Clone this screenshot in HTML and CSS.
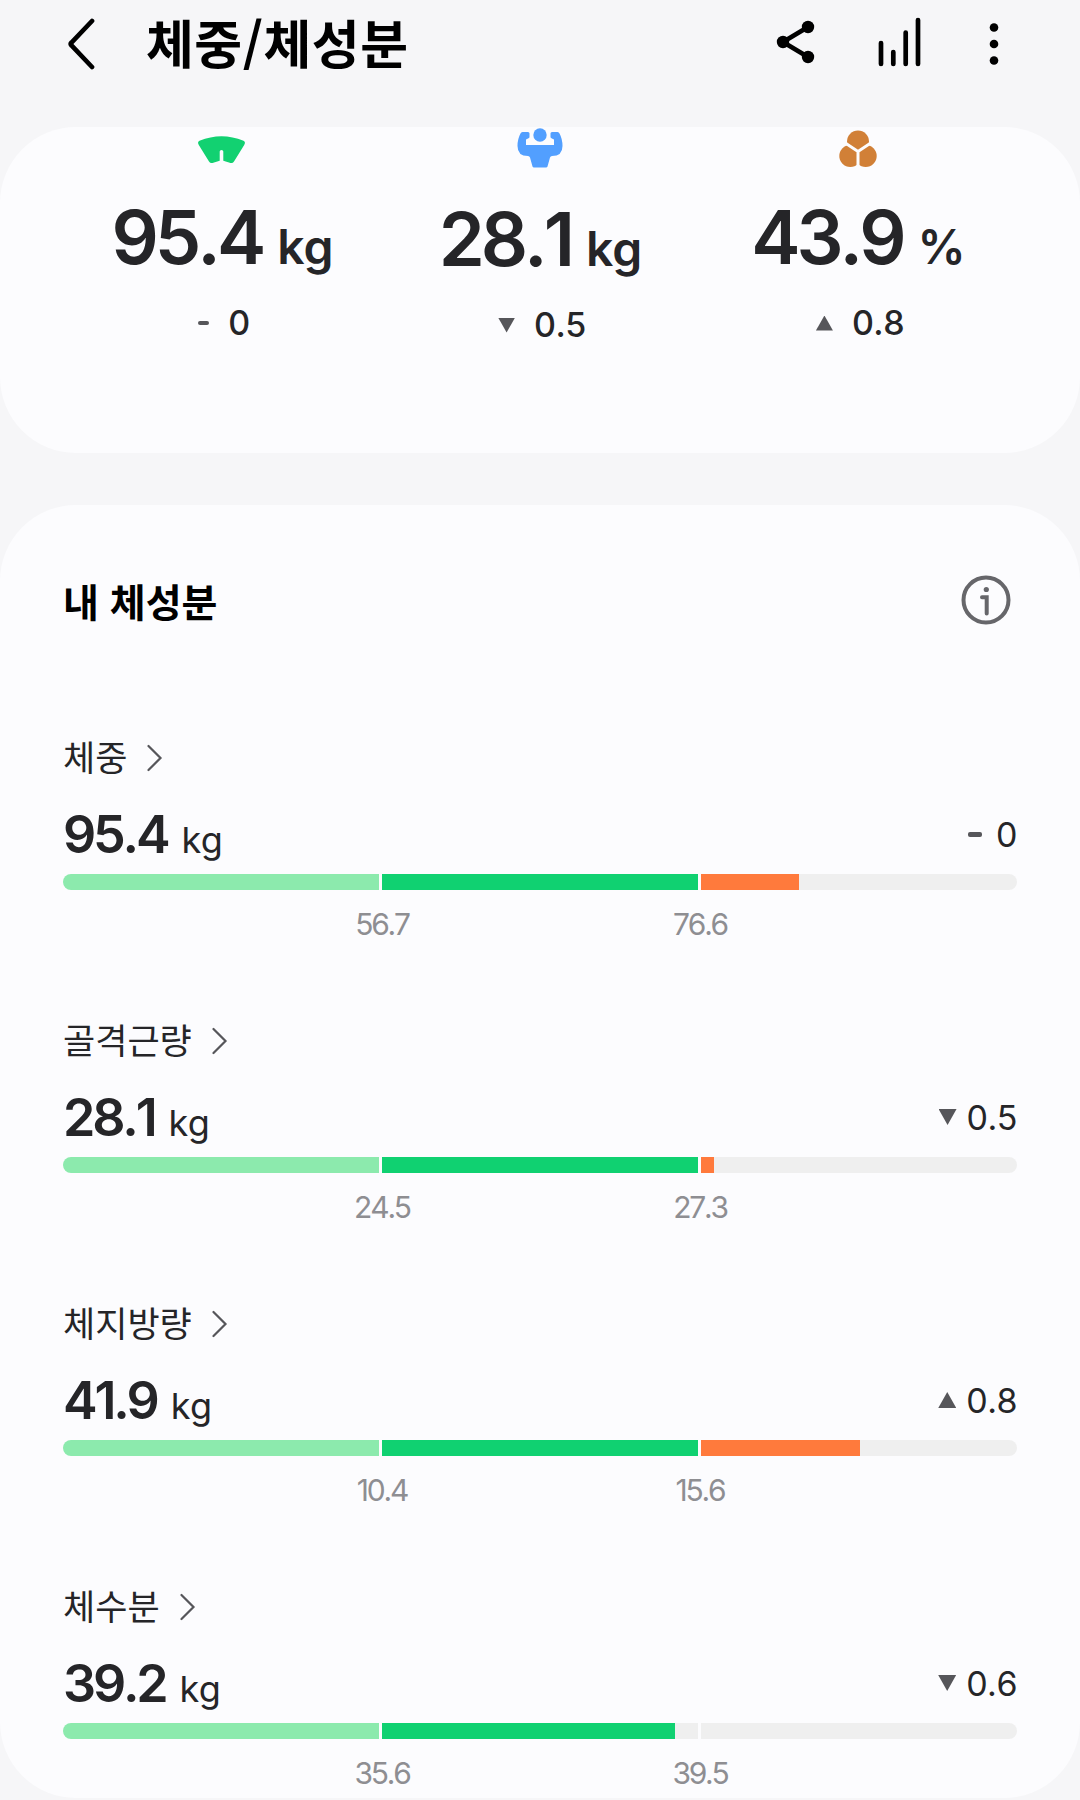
FILE: index.html
```html
<!DOCTYPE html>
<html lang="ko">
<head>
    <meta charset="UTF-8">
    <title>체중/체성분</title>
    <meta name="viewport" content="width=device-width, initial-scale=1">
    <link rel="stylesheet" href="styles.css">
</head>
<body>
    <header class="app-bar">
        <svg class="back" width="28" height="54" viewBox="0 0 28 54"><path d="M25 4 L4.500 25.500 Q3 27 4.500 28.500 L25 50"/></svg>
        <h1>체중/체성분</h1>
        <svg class="share" width="40" height="46" viewBox="0 0 40 46"><path d="M32 8 L7 23 L32 38"/><circle cx="32" cy="8" r="6.200"/><circle cx="7" cy="23" r="6.200"/><circle cx="32" cy="38" r="6.200"/></svg>
        <svg class="chart" width="44" height="50" viewBox="0 0 44 50"><path d="M3 26V47M15.300 35V47M27.700 15.500V47M40 3V47"/></svg>
        <svg class="more" width="10" height="44" viewBox="0 0 10 44"><circle cx="5" cy="5.500" r="4.300"/><circle cx="5" cy="22" r="4.300"/><circle cx="5" cy="38.500" r="4.300"/></svg>
    </header>

    <section class="card summary">
        <div class="stat">
            <svg class="stat-icon" width="50" height="42" viewBox="0 0 50 42"><path fill="#12d171" d="M1.800 18 Q0 15 2.500 13.800 Q24.500 4.500 46.500 13.800 Q49 15 47.200 18 L37 34.500 Q35.800 36.500 33.500 36 L26.300 33.800 V24.500 Q26.300 23 24.500 23 Q22.700 23 22.700 24.500 V33.800 L15.500 36 Q13.200 36.500 12 34.500 Z"/></svg>
            <div class="stat-value">95.4<span class="unit">kg</span></div>
            <div class="stat-delta"><i class="dash"></i>0</div>
        </div>
        <div class="stat muscle">
            <svg class="stat-icon" width="50" height="42" viewBox="0 0 50 42"><circle cx="25" cy="8" r="6.700" fill="#529fff"/><path fill="#529fff" d="M7.500 5 H13 Q14.500 5 14.500 6.500 V10 Q14.500 11 13.500 11.300 L11 12.500 V18 H39 V12.500 L36.500 11.300 Q35.500 11 35.500 10 V6.500 Q35.500 5 37 5 H42.500 Q44 5 44.500 6.500 Q47.500 12 47.500 19 Q47.500 29 37 29 Q35.500 29 35 30.500 L32.500 39.500 Q32.200 40.500 31 40.500 H19 Q17.800 40.500 17.500 39.500 L15 30.500 Q14.500 29 13 29 Q2.500 29 2.500 19 Q2.500 12 5.500 6.500 Q6 5 7.500 5 Z"/></svg>
            <div class="stat-value">28.1<span class="unit">kg</span></div>
            <div class="stat-delta"><i class="down"></i>0.5</div>
        </div>
        <div class="stat fat">
            <svg class="stat-icon" width="50" height="42" viewBox="0 0 50 42"><g fill="#d18037"><circle cx="25" cy="14.500" r="11"/><circle cx="17.300" cy="29" r="11"/><circle cx="32.700" cy="29" r="11"/></g><path d="M10 14.500 L25 24.500 L40 14.500 M25 24.500 V42" fill="none" stroke="#fcfcfe" stroke-width="3"/></svg>
            <div class="stat-value">43.9<span class="unit">%</span></div>
            <div class="stat-delta"><i class="up"></i>0.8</div>
        </div>
    </section>

    <section class="card details">
        <div class="details-head">
            <h2>내 체성분</h2>
            <svg width="50" height="50" viewBox="0 0 50 50"><circle cx="25" cy="25" r="22.500"/><circle class="dot" cx="25.300" cy="14.500" r="2.600"/><path d="M21 22.200 H25.700 V38.500"/></svg>
        </div>

        <div class="metric">
            <div class="metric-name">체중<svg width="16" height="28" viewBox="0 0 16 28"><path d="M1.500 2 L13.500 14 L1.500 26"/></svg></div>
            <div class="metric-row">
                <div class="metric-value">95.4<span class="unit">kg</span></div>
                <div class="metric-delta"><i class="dash"></i>0</div>
            </div>
            <div class="bar">
                <div class="seg low"><div style="width: 100%"></div></div>
                <div class="seg normal"><div style="width: 100%"></div></div>
                <div class="seg high"><div style="width: 31%"></div></div>
            </div>
            <div class="limits"><span>56.7</span><span>76.6</span></div>
        </div>

        <div class="metric">
            <div class="metric-name">골격근량<svg width="16" height="28" viewBox="0 0 16 28"><path d="M1.500 2 L13.500 14 L1.500 26"/></svg></div>
            <div class="metric-row">
                <div class="metric-value">28.1<span class="unit">kg</span></div>
                <div class="metric-delta"><i class="down"></i>0.5</div>
            </div>
            <div class="bar">
                <div class="seg low"><div style="width: 100%"></div></div>
                <div class="seg normal"><div style="width: 100%"></div></div>
                <div class="seg high"><div style="width: 4.3%"></div></div>
            </div>
            <div class="limits"><span>24.5</span><span>27.3</span></div>
        </div>

        <div class="metric">
            <div class="metric-name">체지방량<svg width="16" height="28" viewBox="0 0 16 28"><path d="M1.500 2 L13.500 14 L1.500 26"/></svg></div>
            <div class="metric-row">
                <div class="metric-value">41.9<span class="unit">kg</span></div>
                <div class="metric-delta"><i class="up"></i>0.8</div>
            </div>
            <div class="bar">
                <div class="seg low"><div style="width: 100%"></div></div>
                <div class="seg normal"><div style="width: 100%"></div></div>
                <div class="seg high"><div style="width: 50.4%"></div></div>
            </div>
            <div class="limits"><span>10.4</span><span>15.6</span></div>
        </div>

        <div class="metric">
            <div class="metric-name">체수분<svg width="16" height="28" viewBox="0 0 16 28"><path d="M1.500 2 L13.500 14 L1.500 26"/></svg></div>
            <div class="metric-row">
                <div class="metric-value">39.2<span class="unit">kg</span></div>
                <div class="metric-delta"><i class="down"></i>0.6</div>
            </div>
            <div class="bar">
                <div class="seg low"><div style="width: 100%"></div></div>
                <div class="seg normal"><div style="width: 92.6%"></div></div>
                <div class="seg high"></div>
            </div>
            <div class="limits"><span>35.6</span><span>39.5</span></div>
        </div>
    </section>
</body>
</html>
```
FILE: styles.css
```css
* {
    box-sizing: border-box;
}

body {
    font-family: Inter, 'Noto Sans CJK KR', sans-serif;
    font-kerning: none;
    margin: 0;
    height: 1800px;
    overflow: hidden;
    background: #f6f6f8;
    color: #252528;
}

h1, h2 {
    font-family: 'Noto Sans CJK KR', sans-serif;
    font-weight: 700;
    color: #000;
    margin: 0;
}

svg {
    display: block;
    flex: none;
}

/* header */
.app-bar {
    display: flex;
    align-items: center;
    height: 127px;
    padding: 0 81px 40px 67px;
}

.app-bar h1 {
    font-size: 52px;
    line-height: 80px;
    letter-spacing: 0.5px;
    margin: -3px auto 0 51px;
}

.back path,
.share path,
.chart path {
    fill: none;
    stroke: #000;
    stroke-width: 4.7;
    stroke-linecap: round;
}

.share {
    margin-right: 62px;
    margin-top: -4px;
}

.chart {
    margin-right: 67px;
    margin-top: -4px;
}

.card {
    background: #fcfcfe;
    border-radius: 76px;
}

/* summary */
.summary {
    display: grid;
    grid-template-columns: repeat(3, 318px);
    justify-content: center;
    height: 326px;
}

.stat {
    display: flex;
    flex-direction: column;
    align-items: center;
}

.stat-value {
    display: flex;
    align-items: baseline;
    font-size: 74px;
    font-weight: 600;
    line-height: 90px;
    letter-spacing: -4px;
    margin-top: 23px;
}

.stat-value .unit {
    font-size: 48px;
    letter-spacing: -1px;
    margin-left: 15px;
}

.stat-delta {
    display: flex;
    align-items: center;
    gap: 19px;
    font-size: 34px;
    font-weight: 500;
    line-height: 44px;
    letter-spacing: -0.5px;
    margin-top: 9px;
    padding-left: 4px;
}

.muscle .stat-value {
    margin-top: 25px;
}

.dash {
    width: 11px;
    height: 4px;
    border-radius: 2px;
    background: #56565a;
}

.up, .down {
    width: 17px;
    height: 15px;
    background: #56565a;
    clip-path: polygon(0 100%, 50% 0, 100% 100%);
}

.down {
    clip-path: polygon(0 0, 100% 0, 50% 100%);
}

/* details */
.details {
    margin-top: 52px;
    height: 1293px;
    padding: 54px 63px 0;
}

.details-head {
    display: flex;
    justify-content: space-between;
    align-items: center;
    height: 82px;
    padding-right: 6px;
}

.details-head h2 {
    font-size: 39px;
}

.details-head svg {
    fill: none;
    stroke: #66666a;
    stroke-width: 4;
    stroke-linecap: round;
}

.details-head .dot {
    fill: #66666a;
    stroke: none;
}

.metric {
    height: 283px;
    padding-top: 92px;
}

.metric-name {
    display: flex;
    align-items: center;
    gap: 20px;
    height: 47px;
    padding-bottom: 2px;
    font-family: 'Noto Sans CJK KR', sans-serif;
    font-size: 35px;
    line-height: 45px;
}

.metric-name svg {
    margin-top: 5px;
    fill: none;
    stroke: #56565a;
    stroke-width: 2.2;
    stroke-linecap: round;
}

.metric-row {
    display: flex;
    justify-content: space-between;
    height: 94px;
    padding-top: 25px;
}

.metric-value {
    display: flex;
    align-items: baseline;
    font-size: 52px;
    font-weight: 600;
    line-height: 60px;
    letter-spacing: -3.2px;
}

.metric-value .unit {
    font-size: 36px;
    font-weight: 400;
    letter-spacing: -0.5px;
    margin-left: 14px;
}

.metric-delta {
    display: flex;
    align-items: center;
    gap: 10px;
    height: 58px;
    font-size: 34px;
    letter-spacing: -0.5px;
}

.metric-delta .dash {
    width: 14px;
    height: 5px;
    margin-right: 4px;
}

.metric-delta .up,
.metric-delta .down {
    width: 18px;
    height: 16px;
}

.bar {
    display: grid;
    grid-template-columns: repeat(3, 1fr);
    gap: 2.5px;
    height: 16px;
    border-radius: 8px;
    overflow: hidden;
}

.seg {
    background: #efefef;
}

.seg div {
    height: 100%;
}

.low div {
    background: #8ceaad;
}

.normal div {
    background: #10d171;
}

.high div {
    background: #ff7a3c;
}

.limits {
    display: grid;
    grid-template-columns: 318px 318px;
    justify-content: center;
    margin-top: 15px;
    padding-left: 2px;
    font-size: 30px;
    line-height: 38px;
    letter-spacing: -2.2px;
    color: #8e8e92;
    text-align: center;
}
```
